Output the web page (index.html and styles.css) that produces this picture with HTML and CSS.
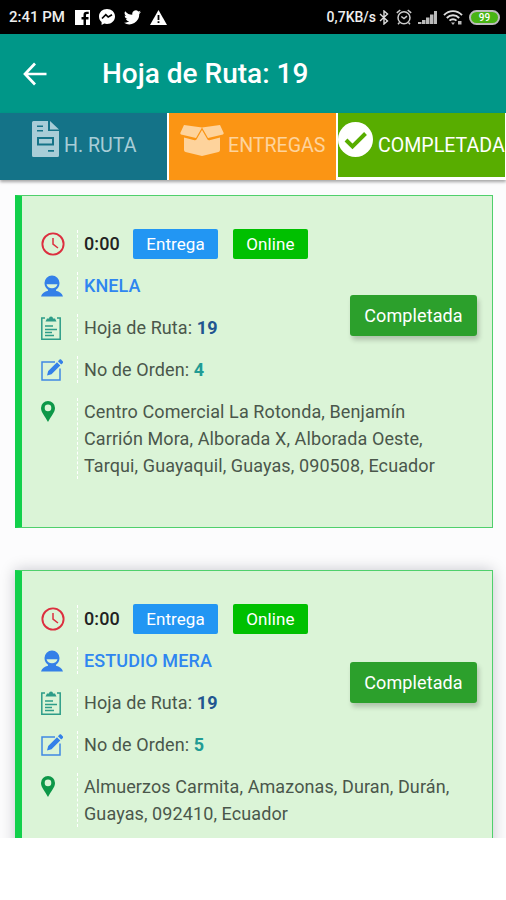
FILE: index.html
```html
<!DOCTYPE html>
<html lang="es">
<head>
  <meta charset="UTF-8">
  <title>Hoja de Ruta</title>
  <meta name="viewport" content="width=device-width, initial-scale=1.0">
  <link rel="stylesheet" href="styles.css">
</head>
<body>

  <!-- Shared icons -->
  <svg class="hidden">
    <symbol id="clock" viewBox="0 0 24 24"><g fill="none" stroke="#dc2f3f" stroke-width="1.9"><circle cx="12" cy="12" r="10.6"/><path d="M12 6v6.2l5 3.8" stroke-width="1.5"/></g></symbol>
    <symbol id="user" viewBox="0 0 22 22"><path d="M3.500 8a7.500 7.500 0 0 1 15 0c0 3-1.500 5.500-3.500 6.800v1c3.500.7 6 2.600 7 5.700H0c1-3.100 3.500-5 7-5.700v-1C5 13.500 3.500 11 3.500 8zm2 1.200c.7 2.700 2.700 4 5.500 4s4.800-1.300 5.500-4z" fill="#3480e8" fill-rule="evenodd"/></symbol>
    <symbol id="clipboard" viewBox="0 0 20 25"><g fill="none" stroke="#2d9c88" stroke-width="1.500"><path d="M4 3H.8v21.200h18.400V3H16M4 11h8M4 14.500h12M4 17.500h7M4 20.500h9"/></g><path d="M4.500 6.500 6 3.500h2a2 2 0 0 1 4 0h2l1.500 3z" fill="#2d9c88"/></symbol>
    <symbol id="edit" viewBox="0 0 22 22"><path d="M14 3H1v18h18V9.500" fill="none" stroke="#4088e4" stroke-width="1.500"/><path d="M6 16.500 7.200 12 16 3.200l3.300 3.300-8.800 8.800zM16.900 2.300 18.600.6c.5-.5 1-.5 1.500 0l1.800 1.800c.5.500.5 1 0 1.500l-1.700 1.700z" fill="#3480e8"/></symbol>
    <symbol id="pin" viewBox="0 0 14 21"><path d="M7 0a7 7 0 0 0-7 7c0 4.500 4.500 9 7 14 2.500-5 7-9.500 7-14a7 7 0 0 0-7-7zm0 3.600a3.300 3.300 0 1 1 0 6.600 3.300 3.300 0 0 1 0-6.600z" fill="#0d9748" fill-rule="evenodd"/></symbol>
  </svg>

  <div class="statusbar">
    <span class="time">2:41 PM</span>
    <svg class="app" width="15" height="15" viewBox="0 0 15 15"><path d="M0 0h15v15h-4V9.500h2.500V7H11V5.300c0-.8.400-1.200 1.200-1.200h1.500V1.800h-2C9.500 1.800 8.500 3 8.500 5v2H6.500v2.500h2V15H0z" fill="#fff"/></svg>
    <svg class="app" width="16" height="16" viewBox="0 0 16 16"><path d="M8 0C3.500 0 0 3.200 0 7.400c0 2.300 1 4.200 2.600 5.500V16l2.600-1.500c.9.200 1.800.4 2.800.4 4.500 0 8-3.200 8-7.500S12.500 0 8 0z" fill="#fff"/><path d="m3 9.500 3.800-3.800L9.200 8 13 5.800" fill="none" stroke="#000" stroke-width="1.700"/></svg>
    <svg class="app" width="17" height="15" viewBox="0 0 24 20"><path d="M24 2.400a10 10 0 0 1-2.800.8A5 5 0 0 0 23.300.5a10 10 0 0 1-3.100 1.200A4.900 4.900 0 0 0 11.800 6.200 14 14 0 0 1 1.700 1a4.900 4.900 0 0 0 1.500 6.600A4.900 4.900 0 0 1 1 7a4.900 4.900 0 0 0 3.900 4.900 5 5 0 0 1-2.200.1 4.900 4.900 0 0 0 4.600 3.400A9.900 9.900 0 0 1 0 17.400 14 14 0 0 0 21.500 5z" fill="#fff"/></svg>
    <svg class="app" width="17" height="15" viewBox="0 0 17 15"><path d="M8.500 0 17 15H0z" fill="#fff"/><path d="M8.500 5v5M8.500 11.300v1.800" stroke="#000" stroke-width="1.800"/></svg>
    <span class="spacer"></span>
    <span class="net">0,7KB/s</span>
    <svg width="10" height="15" viewBox="0 0 10 15"><path d="M1 4l7.500 7L5 14V1l3.500 3L1 11" fill="none" stroke="#ddd" stroke-width="1.400"/></svg>
    <svg class="alarm" width="16" height="16" viewBox="0 0 16 16"><g fill="none" stroke="#ccc" stroke-width="1.500"><circle cx="8" cy="8.800" r="6"/><path d="M.8 3.800 4.300 1M15.200 3.800 11.700 1M5.300 7.500 8 9.500l3-2.300M3.500 13.500 2 15.200M12.500 13.500l1.500 1.700"/></g></svg>
    <svg class="signal" width="20" height="13" viewBox="0 0 20 13"><path d="M0 11h3.500v2H0zM4 9h3.500v4H4zM8 6.500h3.500V13H8zM12 3.500h3.500V13H12zM16 0h3v13h-3z" fill="#bbb"/></svg>
    <svg class="wifi" width="20" height="15" viewBox="0 0 20 15"><g fill="none" stroke="#ddd" stroke-width="1.900"><path d="M1 5.200C6-.2 14-.2 19 5.200M3.800 8c3.500-3.600 8.900-3.600 12.400 0M6.500 10.700c2-2 5-2 7 0"/></g><path d="M8 12.500h4L10 15zM15 11h3.500v3.500H15z" fill="#bbb"/></svg>
    <span class="battery">99</span>
  </div>

  <header>
    <svg width="24" height="24" viewBox="0 0 24 24"><path d="M12 1.500 2 12l10 10.500M2 12h21.500" fill="none" stroke="#fff" stroke-width="2.700"/></svg>
    <h1>Hoja de Ruta: 19</h1>
  </header>

  <nav class="tabs">
    <div class="tab route">
      <svg width="27" height="36" viewBox="0 0 27 36"><path d="M1.500 0H16v10h11v24.500q0 1.500-1.500 1.500h-24Q0 36 0 34.500v-33Q0 0 1.500 0zM18 0l9 8.500h-9zM5 4.500V6h6V4.500zM5 9v1.500h6V9zM5 16v8.500h17V16zm2 2h13v4.500H7zM16 29v1.800h6V29z" fill="#a8cdd7" fill-rule="evenodd"/></svg>
      <span>H. RUTA</span>
    </div>
    <div class="tab delivery">
      <svg width="44" height="32" viewBox="0 0 44 32"><path d="M4 1 22 3.500 16 14 1 10.500Q0 10 .4 8.800zM40 1 22 3.500 28 14l15-3.500q1-.5.600-1.700zM22 6l5.500 9.500q.7 1 2 .7L40 13.500V26q0 1.500-1.500 2L22 32 5.500 28Q4 27.500 4 26V13.500l10.500 2.700q1.300.3 2-.7z" fill="#fed39c"/></svg>
      <span>ENTREGAS</span>
    </div>
    <div class="tab done">
      <svg width="35" height="35" viewBox="0 0 35 35"><circle cx="17.500" cy="17.500" r="17.500" fill="#fff"/><path d="m8 18 6.500 6.500 13-13" fill="none" stroke="#58ad00" stroke-width="4"/></svg>
      <span>COMPLETADA</span>
    </div>
  </nav>

  <main>
    <!-- Order 4 -->
    <div class="card">
      <div class="row"><div class="icon"><svg width="24" height="24"><use href="#clock"/></svg></div><div class="info"><b class="hour">0:00</b><span class="badge type">Entrega</span><span class="badge online">Online</span></div></div>
      <div class="row"><div class="icon"><svg width="22" height="22"><use href="#user"/></svg></div><div class="info client">KNELA</div></div>
      <div class="row"><div class="icon"><svg width="20" height="25"><use href="#clipboard"/></svg></div><div class="info">Hoja de Ruta: <b class="navy">19</b></div></div>
      <div class="row"><div class="icon"><svg width="22" height="22"><use href="#edit"/></svg></div><div class="info">No de Orden: <b class="teal">4</b></div></div>
      <div class="row address"><div class="icon"><svg width="14" height="21"><use href="#pin"/></svg></div><div class="info">Centro Comercial La Rotonda, Benjamín<br>Carrión Mora, Alborada X, Alborada Oeste,<br>Tarqui, Guayaquil, Guayas, 090508, Ecuador</div></div>
      <button>Completada</button>
    </div>

    <!-- Order 5 -->
    <div class="card raised">
      <div class="row"><div class="icon"><svg width="24" height="24"><use href="#clock"/></svg></div><div class="info"><b class="hour">0:00</b><span class="badge type">Entrega</span><span class="badge online">Online</span></div></div>
      <div class="row"><div class="icon"><svg width="22" height="22"><use href="#user"/></svg></div><div class="info client">ESTUDIO MERA</div></div>
      <div class="row"><div class="icon"><svg width="20" height="25"><use href="#clipboard"/></svg></div><div class="info">Hoja de Ruta: <b class="navy">19</b></div></div>
      <div class="row"><div class="icon"><svg width="22" height="22"><use href="#edit"/></svg></div><div class="info">No de Orden: <b class="teal">5</b></div></div>
      <div class="row address"><div class="icon"><svg width="14" height="21"><use href="#pin"/></svg></div><div class="info">Almuerzos Carmita, Amazonas, Duran, Durán,<br>Guayas, 092410, Ecuador</div></div>
      <button>Completada</button>
    </div>
  </main>

</body>
</html>
```
FILE: styles.css
```css
* {
  box-sizing: border-box;
}

body {
  margin: 0;
  height: 900px;
  overflow: hidden;
  font-family: Roboto, sans-serif;
  background: #fff;
}

.hidden {
  display: none;
}

svg {
  display: block;
  flex: none;
}

.statusbar {
  display: flex;
  align-items: center;
  height: 34px;
  padding: 0 6px 0 9px;
  background: #000;
  color: #eee;
  font-size: 15px;
  font-weight: 500;
}

.time {
  width: 56px;
  white-space: nowrap;
}

.app {
  margin-left: 10px;
}

.app + .app {
  margin-left: 9px;
}

.spacer {
  flex: 1;
}

.net {
  font-size: 14px;
  margin-right: 3px;
}

.alarm {
  margin-left: 7px;
}

.signal {
  margin-left: 6px;
}

.wifi {
  margin-left: 5px;
}

.battery {
  width: 31px;
  height: 15px;
  margin-left: 6px;
  border: 2px solid #bbb;
  border-radius: 8px;
  background: #48b414;
  color: #fff;
  font-size: 10px;
  line-height: 11px;
  text-align: center;
}

header {
  display: flex;
  align-items: center;
  height: 79px;
  padding-left: 23px;
  background: #009788;
  color: #fff;
}

h1 {
  margin: 0 0 0 55px;
  font-size: 28px;
  font-weight: 500;
}

.tabs {
  display: grid;
  grid-template-columns: 167px 167px 167px;
  gap: 2px;
  height: 67px;
  background: #fff;
  box-shadow: 0 2px 3px rgba(0, 0, 0, 0.35);
  position: relative;
  z-index: 1;
}

.tab {
  display: flex;
  font-size: 19.6px;
  line-height: 24px;
  white-space: nowrap;
}

.tab span {
  margin-top: 21px;
}

.route {
  padding: 0 0 0 32px;
  background: #147388;
  color: #a8cdd7;
}

.route svg {
  margin: 8px 5px 0 0;
}

.delivery {
  padding-left: 11px;
  background: #fb9514;
  color: #fed39c;
}

.delivery svg {
  margin: 11px 4px 0 0;
}

.done {
  height: 64px;
  background: #58ad00;
  color: #fff;
}

.done svg {
  margin: 9px 5px 0 0;
}

main {
  height: 658px;
  padding: 15px 13px 0 15px;
  overflow: hidden;
  background: #fcfcfd;
}

.card {
  position: relative;
  height: 333px;
  padding: 34px 0 0 17px;
  margin-bottom: 42px;
  background: #dbf4d7;
  border: 1px solid #4fd06c;
  border-left: 7px solid #12d04b;
}

.raised {
  box-shadow: 0 0 14px rgba(0, 0, 30, 0.22);
}

.row {
  display: flex;
  min-height: 27px;
  margin-bottom: 15px;
}

.icon {
  display: flex;
  align-items: center;
  width: 39px;
  padding-left: 2px;
  border-right: 1px dashed #fff;
}

.address .icon {
  align-items: flex-start;
  padding-top: 3px;
}

.info {
  display: flow-root;
  padding-left: 6px;
  color: #4a574b;
  font-size: 18px;
  line-height: 27px;
  letter-spacing: 0.1px;
}

.hour {
  display: inline-block;
  width: 49px;
  color: #222;
  font-weight: 500;
}

.badge {
  display: inline-block;
  height: 30px;
  margin: -2px 15px -2px 0;
  border-radius: 2px;
  color: #fff;
  font-size: 17px;
  line-height: 30px;
  text-align: center;
}

.type {
  width: 85px;
  background: #2296f3;
}

.online {
  width: 75px;
  background: #00c000;
}

.client {
  color: #2f86f0;
  font-weight: 500;
}

.navy {
  color: #215590;
}

.teal {
  color: #219b94;
}

button {
  position: absolute;
  top: 30%;
  right: 15px;
  width: 127px;
  height: 41px;
  padding: 0;
  border: none;
  border-radius: 3px;
  background: #2ca02c;
  color: #fff;
  font: 18px Roboto, sans-serif;
  letter-spacing: 0.1px;
  box-shadow: 2px 4px 5px rgba(0, 0, 0, 0.2);
}

.raised button {
  top: 91px;
}
```
